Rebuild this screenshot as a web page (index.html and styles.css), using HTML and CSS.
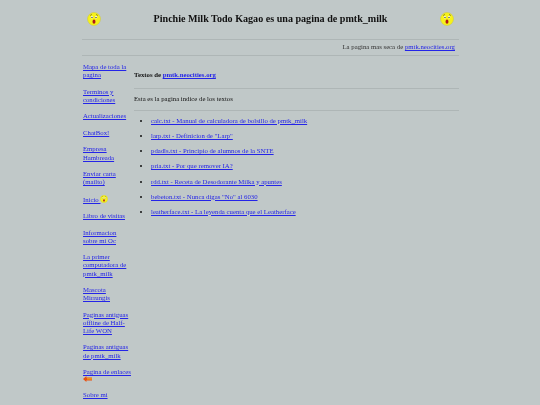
FILE: index.html
```html
<!DOCTYPE html>
<html lang="es">
<head>
<meta charset="utf-8">
<title>Pinchie Milk Todo Kagao</title>
<link rel="stylesheet" href="styles.css">
</head>
<body>
<svg width="0" height="0" class="defs">
  <defs>
    <symbol id="face" viewBox="0 0 16 16">
      <circle cx="8" cy="8" r="7.4" fill="#f6f21a" stroke="#c8c432" stroke-width=".5"/>
      <path d="M3.6 4 5.6 2.8M12.4 4 10.4 2.8" stroke="#55552a" stroke-width=".8" fill="none"/>
      <circle cx="5.6" cy="6" r="1.3" fill="#fff"/><circle cx="10.4" cy="6" r="1.3" fill="#fff"/>
      <circle cx="5.7" cy="6.2" r=".7" fill="#222"/><circle cx="10.3" cy="6.2" r=".7" fill="#222"/>
      <ellipse cx="8" cy="11" rx="1.7" ry="2.3" fill="#b01818"/>
    </symbol>
  </defs>
</svg>
<div class="page">
  <header class="top">
    <svg class="face"><use href="#face"/></svg>
    <h1>Pinchie Milk Todo Kagao es una pagina de pmtk_milk</h1>
    <svg class="face"><use href="#face"/></svg>
  </header>
  <hr>
  <p class="tag">La pagina mas seca de <a href="#">pmtk.neocities.org</a></p>
  <hr>
  <div class="cols">
    <nav class="side">
      <a href="#">Mapa de toda la pagina</a>
      <a href="#">Terminos y condiciones</a>
      <a href="#">Actualizaciones</a>
      <a href="#">ChatBox!</a>
      <a href="#">Empresa Hambreada</a>
      <a href="#">Enviar carta (mailto)</a>
      <a href="#">Inicio <svg class="mini"><use href="#face"/></svg></a>
      <a href="#">Libro de visitas</a>
      <a href="#">Informacion sobre mi Oc</a>
      <a href="#">La primer computadora de pmtk_milk</a>
      <a href="#">Mascota Mirrungis</a>
      <a href="#">Paginas antiguas offline de Half-Life WON</a>
      <a href="#">Paginas antiguas de pmtk_milk</a>
      <a href="#">Pagina de enlaces <svg class="arrow" viewBox="0 0 9 6"><path d="M0 3 3.4 0V1.6H9V4.4H3.4V6Z" fill="#e8500f"/><path d="M4 2.4H9V3.4H4Z" fill="#f6c21a"/></svg></a>
      <a href="#">Sobre mi</a>
    </nav>
    <main class="content">
      <h2>Textos de <a href="#">pmtk.neocities.org</a></h2>
      <hr>
      <p class="intro">Esta es la pagina indice de los textos</p>
      <hr>
      <ul>
        <li><a href="#">calc.txt - Manual de calculadora de bolsillo de pmtk_milk</a></li>
        <li><a href="#">larp.txt - Definicion de "Larp"</a></li>
        <li><a href="#">pdadls.txt - Principio de alumnos de la SNTE</a></li>
        <li><a href="#">pria.txt - Por que remover IA?</a></li>
        <li><a href="#">rdd.txt - Receta de Desodorante Milka y apuntes</a></li>
        <li><a href="#">bebeton.txt - Nunca digas "No" al 6030</a></li>
        <li><a href="#">leatherface.txt - La leyenda cuenta que el Leatherface</a></li>
      </ul>
    </main>
  </div>
</div>
</body>
</html>
```
FILE: styles.css
```css
html, body {
  margin: 0;
  height: 405px;
  overflow: hidden;
}
body {
  background: #c0c8c8;
  color: #111;
  font-family: "Liberation Serif", serif;
  font-size: 6.75px;
  line-height: 8.1px;
}
.defs { position: absolute; }
a { color: #2424e8; }
hr {
  border: 0;
  border-top: 1px solid #aeb6b6;
  margin: 0;
}
.page {
  width: 377px;
  margin-left: 82px;
  filter: blur(0.2px);
}
.top {
  display: flex;
  justify-content: space-between;
  align-items: center;
  box-sizing: border-box;
  height: 39px;
  padding: 0 4px 2px;
}
.top h1 {
  margin: 0;
  font-size: 10.1px;
  line-height: 12px;
  font-weight: bold;
  color: #111;
}
.face { width: 14px; height: 14px; margin: 0 1px; }
.tag {
  margin: 0;
  padding: 3px 4px 4px;
  text-align: right;
  color: #333;
}
.cols {
  display: flex;
  padding-top: 7px;
}
.side {
  width: 49px;
  flex: none;
  margin: 0 1px;
  display: flex;
  flex-direction: column;
  gap: 8.45px;
}
.side a { display: block; }
.mini { width: 8px; height: 8px; vertical-align: -1px; }
.arrow { width: 9px; height: 6px; display: block; }
.content { flex: 1; margin-left: 1px; }
.content h2 {
  margin: 0;
  padding: 8px 0 9px;
  font-size: 6.75px;
  line-height: 8.1px;
  font-weight: bold;
}
.intro {
  margin: 0;
  padding: 6px 0 7px;
}
.content ul {
  margin: 5.5px 0 0;
  padding-left: 17px;
  list-style: disc;
}
.content li { margin-bottom: 7.1px; }
```
